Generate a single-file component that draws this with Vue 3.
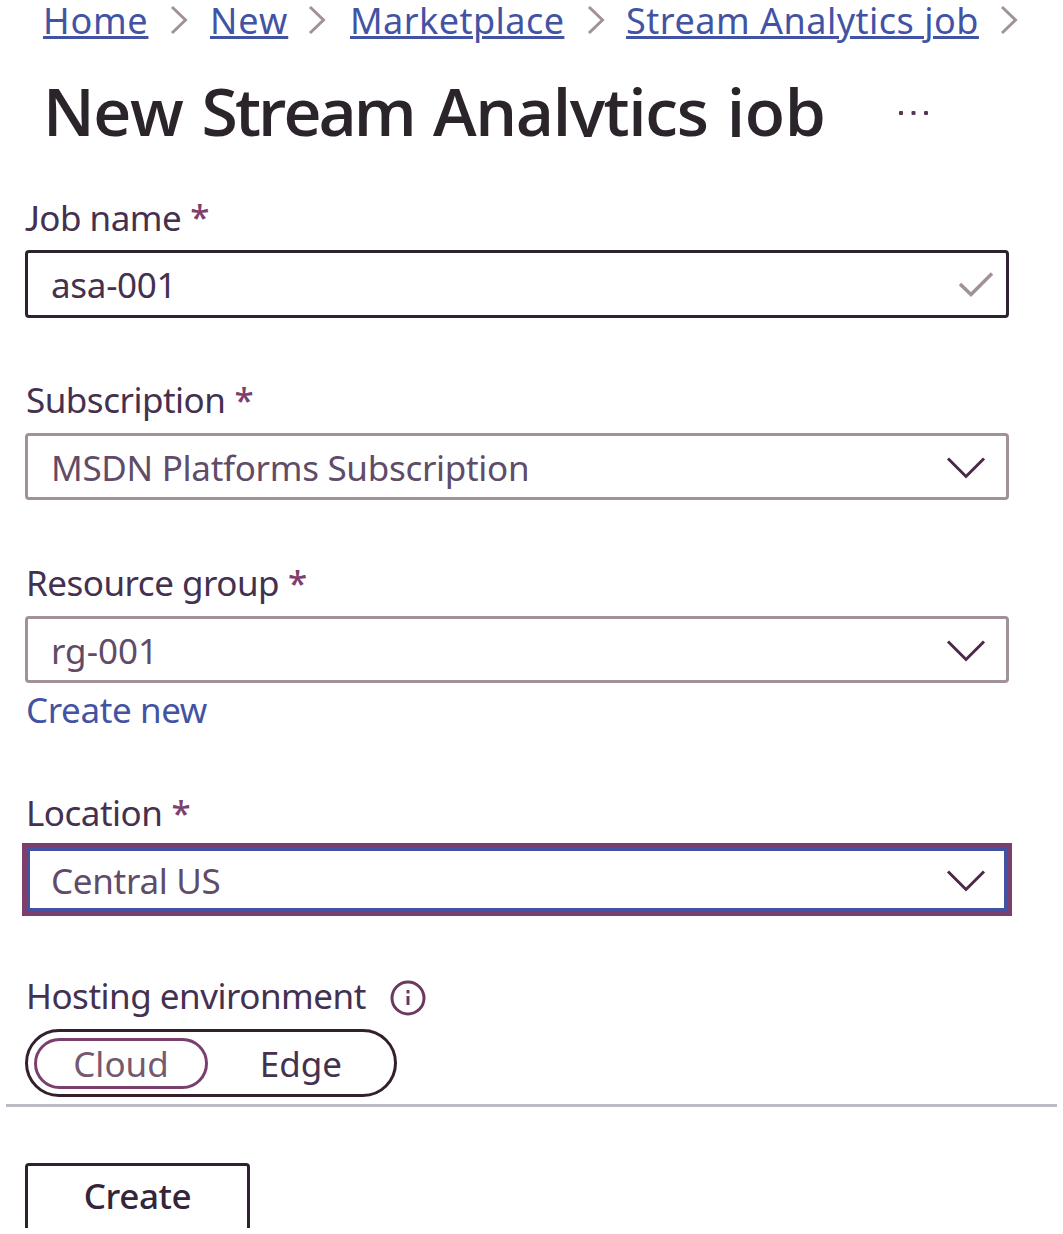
<script setup>
const crumbs = [
  { text: 'Home', cls: 'home' },
  { text: 'New', cls: 'new' },
  { text: 'Marketplace', cls: 'market' },
  { text: 'Stream Analytics job', cls: 'stream' },
]
const fields = [
  { id: 'job', label: 'Job name', value: 'asa-001', icon: 'check' },
  { id: 'sub', label: 'Subscription', value: 'MSDN Platforms Subscription', icon: 'chevron' },
  { id: 'group', label: 'Resource group', value: 'rg-001', icon: 'chevron', link: 'Create new' },
  { id: 'loc', label: 'Location', value: 'Central US', icon: 'chevron' },
]
</script>

<template>
  <main class="page">
    <nav class="crumbs">
      <span v-for="c in crumbs" :key="c.text" class="crumb" :class="c.cls">
        <a>{{ c.text }}</a>
        <svg width="18" height="30" viewBox="0 0 18 30"><path d="M2 2 L15.5 15 L2 28" /></svg>
      </span>
    </nav>

    <header class="head">
      <h1>New <span class="tight">Stream</span> Analytics <span class="loose">job</span></h1>
      <svg class="more" width="34" height="8" viewBox="0 0 34 8">
        <rect x="2" y="2" width="4" height="4" rx="1" /><rect x="14.5" y="2" width="4" height="4" rx="1" /><rect x="27" y="2" width="4" height="4" rx="1" />
      </svg>
    </header>

    <section v-for="f in fields" :key="f.id" class="field" :class="f.id">
      <div class="label"><span class="name">{{ f.label }}</span><span class="star">*</span></div>
      <div class="box">
        <span class="value">{{ f.value }}</span>
        <svg v-if="f.icon === 'check'" class="check" width="38" height="28" viewBox="0 0 38 28"><path d="M3 13 L14 23.5 L35 2.5" /></svg>
        <svg v-else class="chev" width="40" height="24" viewBox="0 0 40 24"><path d="M2 2.5 L20 20.5 L38 2.5" /></svg>
      </div>
      <a v-if="f.link" class="link"><span>{{ f.link }}</span></a>
    </section>

    <section class="field host">
      <div class="label">
        <span class="name">Hosting environment</span>
        <svg class="info" width="36" height="36" viewBox="0 0 36 36">
          <circle cx="18" cy="18" r="16" />
          <path d="M18 16 V25" /><path class="dot" d="M18 10 V13.4" />
        </svg>
      </div>
      <div class="toggle">
        <div class="opt on"><span>Cloud</span></div>
        <div class="opt"><span>Edge</span></div>
      </div>
    </section>

    <hr />
    <button class="create"><span>Create</span></button>
  </main>
</template>

<style>
body { margin: 0; background: #fff; }
</style>

<style scoped>
.page {
  box-sizing: border-box;
  width: 1063px;
  height: 1234px;
  overflow: hidden;
  display: flex;
  flex-direction: column;
  background: #fff;
  color: #44304f;
  font-family: "Noto Sans", "Open Sans", sans-serif;
  font-size: 35px;
  white-space: nowrap;
}
.crumbs { display: flex; height: 44px; padding-left: 43px; flex: none; }
.crumb { display: flex; justify-content: space-between; color: #4353a4; font-size: 36px; line-height: 42px; }
.crumb a { text-decoration: underline; text-decoration-thickness: 3px; text-underline-offset: 2px; }
.crumb svg { flex: none; margin: 5px 0 0; fill: none; stroke: #a0919a; stroke-width: 3; }
.crumb.home { width: 145px; margin-right: 22px; letter-spacing: 0.75px; }
.crumb.new { width: 116px; margin-right: 24px; letter-spacing: 1px; }
.crumb.market { width: 255px; margin-right: 21px; letter-spacing: 0.45px; }
.crumb.stream { width: 392px; letter-spacing: 0.5px; }
.head { display: flex; height: 93px; overflow: hidden; flex: none; padding-left: 43px; }
h1 {
  margin: 0;
  width: 854px;
  font-family: "Open Sans", "Noto Sans", sans-serif;
  font-size: 66px;
  font-weight: 600;
  line-height: 132px;
  letter-spacing: -1.4px;
  word-spacing: 3.5px;
  color: #2b252b;
}
.tight { letter-spacing: -3px; }
.loose { letter-spacing: -0.3px; }
.more { margin-top: 65px; fill: #59364f; }
.field { flex: none; width: 984px; margin-left: 25px; height: 183px; }
.job { margin-top: 63px; }
.group { height: 230px; }
.label { display: flex; height: 50px; line-height: 34px; padding-left: 1px; letter-spacing: -0.5px; }
.job .label { padding-left: 0; }
.job .name { display: inline-block; }
.job .name::first-letter { font-family: Lato, sans-serif; }
.star { color: #7d3f6c; margin-left: 9px; font-weight: 500; }
.box {
  box-sizing: border-box;
  height: 67px;
  display: flex;
  align-items: center;
  justify-content: space-between;
  border: 3px solid #a0919a;
  border-radius: 4px;
  padding: 0 20px 0 23px;
}
.chev, .check { position: relative; top: 1px; }
.value { line-height: 60px; margin-top: 2px; color: #604c68; letter-spacing: -0.3px; }
.job .box { height: 68px; border-color: #2f2230; padding-right: 11px; }
.job .value { color: #44304f; }
.group .value { letter-spacing: 0; }
.loc .box {
  border: 5px solid #4353a4;
  border-radius: 0;
  padding: 0 18px 0 21px;
  outline: 5px solid #7b3f6e;
  outline-offset: -2px;
}
.check { fill: none; stroke: #a0919a; stroke-width: 3.5; }
.chev { fill: none; stroke: #4c2947; stroke-width: 3; }
.link { display: block; padding-left: 1px; line-height: 54px; color: #4353a4; letter-spacing: -0.4px; }
.info { margin: 1px 0 0 24px; fill: none; stroke: #6b3a5f; stroke-width: 3; }
.host { height: 117px; }
.toggle {
  box-sizing: border-box;
  display: flex;
  align-items: center;
  width: 372px;
  height: 68px;
  padding-left: 6px;
  border: 3px solid #33202f;
  border-radius: 34px;
}
.opt { box-sizing: border-box; width: 186px; height: 51px; line-height: 51px; text-align: center; }
.on { width: 174px; line-height: 46px; border: 3px solid #7b3f6e; border-radius: 26px; color: #75596f; }
hr { flex: none; width: 1051px; height: 3px; margin: 8px 0 0 6px; border: 0; background: #bdbac4; }
.create {
  flex: none;
  box-sizing: border-box;
  width: 225px;
  height: 65px;
  margin: 56px 0 0 25px;
  padding: 0 0 2px;
  border: 3px solid #2f2230;
  border-bottom: 0;
  border-radius: 4px 4px 0 0;
  background: #fff;
  color: #33253a;
  font: 500 35px/60px "Noto Sans", "Open Sans", sans-serif;
  letter-spacing: -0.4px;
}
</style>
